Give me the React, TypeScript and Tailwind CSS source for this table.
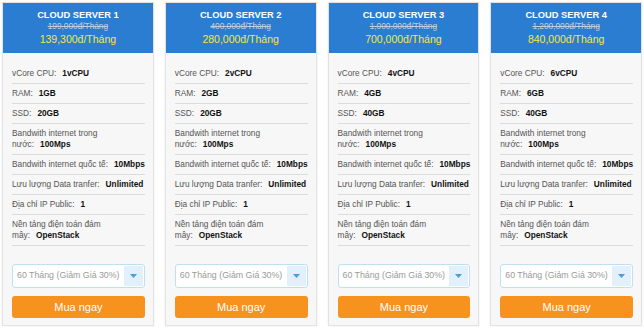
import type { ReactNode } from "react";

interface Plan {
  name: string;
  oldPrice: string;
  price: string;
  cpu: string;
  ram: string;
  ssd: string;
}

const plans: Plan[] = [
  { name: "CLOUD SERVER 1", oldPrice: "199,000đ/Tháng", price: "139,300đ/Tháng", cpu: "1vCPU", ram: "1GB", ssd: "20GB" },
  { name: "CLOUD SERVER 2", oldPrice: "400,000đ/Tháng", price: "280,000đ/Tháng", cpu: "2vCPU", ram: "2GB", ssd: "20GB" },
  { name: "CLOUD SERVER 3", oldPrice: "1,000,000đ/Tháng", price: "700,000đ/Tháng", cpu: "4vCPU", ram: "4GB", ssd: "40GB" },
  { name: "CLOUD SERVER 4", oldPrice: "1,200,000đ/Tháng", price: "840,000đ/Tháng", cpu: "6vCPU", ram: "6GB", ssd: "40GB" },
];

// rows never wrap on their own; the two long labels break by hand like the original
function Row({ label, value }: { label: ReactNode; value: string }) {
  return (
    <li className="border-b border-[#dcdcdc] py-[4px] text-[8.3px] leading-[11px] whitespace-nowrap text-[#555]">
      {label}
      <span className="ml-[6px] font-bold text-[#111]">{value}</span>
    </li>
  );
}

function PlanCard({ plan }: { plan: Plan }) {
  return (
    <div className="flex flex-col border border-[#e2e2e2] bg-[#f7f7f7] shadow-[0_0_2px_rgba(0,0,0,0.08)]">
      <div className="flex h-[50px] flex-col items-center justify-center bg-[#2a7dd1] pb-[1px]">
        <h3 className="text-[9.3px] leading-[12px] font-bold text-white">{plan.name}</h3>
        <p className="text-[8.3px] leading-[10px] text-[#c2cedb] line-through">{plan.oldPrice}</p>
        <p className="mt-[1px] text-[10.5px] leading-[14px] text-[#f7ea3a]">{plan.price}</p>
      </div>

      <div className="pt-[11px] pr-[8px] pb-[7px] pl-[9px]">
        <ul>
          <Row label="vCore CPU:" value={plan.cpu} />
          <Row label="RAM:" value={plan.ram} />
          <Row label="SSD:" value={plan.ssd} />
          <Row label={<>Bandwith internet trong<br />nước:</>} value="100Mps" />
          <Row label="Bandwith internet quốc tế:" value="10Mbps" />
          <Row label="Lưu lượng Data tranfer:" value="Unlimited" />
          <Row label="Địa chỉ IP Public:" value="1" />
          <Row label={<>Nền tảng điện toán đám<br />mây:</>} value="OpenStack" />
        </ul>

        <div className="mt-[18px] flex h-[24px] items-center justify-between rounded-[3px] border border-[#bfe0f2] bg-white pr-[1px] pl-[4px]">
          <span className="text-[8.8px] text-[#9a9a9a]">60 Tháng (Giảm Giá 30%)</span>
          <span className="flex h-[20px] w-[19px] items-center justify-center bg-[#e1f0fa]">
            <svg width="7" height="4" viewBox="0 0 7 4">
              <path d="M0 0h7L3.5 4z" fill="#4a9ed6" />
            </svg>
          </span>
        </div>

        <button className="mt-[8px] h-[22px] w-full rounded-[3px] bg-[#f7921f] text-[11px] text-white">
          Mua ngay
        </button>
      </div>
    </div>
  );
}

export default function App() {
  return (
    <div className="min-h-[329px] bg-white px-[2px] pt-[2px] font-['Liberation_Sans',Arial,sans-serif]">
      <div className="grid grid-cols-4 gap-[11px]">
        {plans.map((plan) => (
          <PlanCard key={plan.name} plan={plan} />
        ))}
      </div>
    </div>
  );
}
